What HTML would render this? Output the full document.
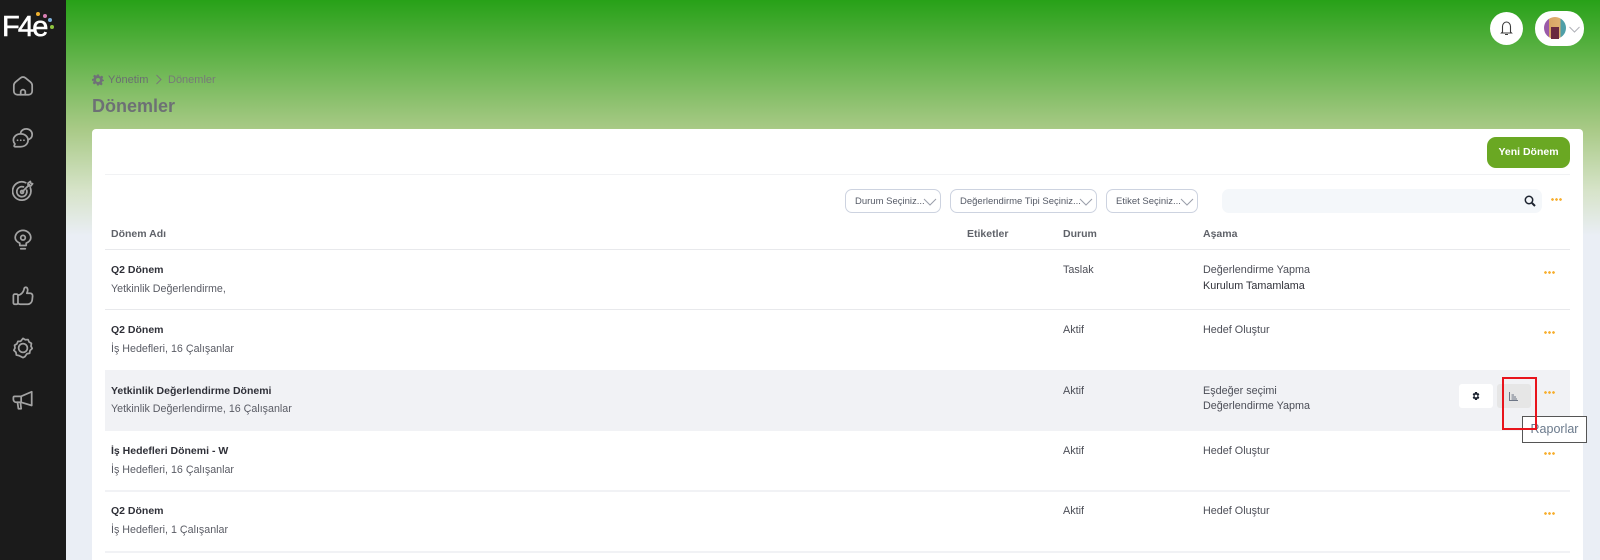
<!DOCTYPE html>
<html lang="tr"><head><meta charset="utf-8"><title>Dönemler</title>
<style>
*{box-sizing:border-box}
html,body{margin:0;padding:0;width:1600px;height:560px;overflow:hidden}
body{position:relative;font-family:"Liberation Sans",sans-serif;background:#eaeef5;color:#3f4254}
.a{position:absolute;white-space:nowrap}
#bg{left:0;top:0;width:1600px;height:240px;background:linear-gradient(#27a118 0,#a9ca87 130px,#d6e3c8 190px,#eaeef5 236px)}
#side{left:0;top:0;width:65.5px;height:560px;background:#1b1b1b}
#side svg{position:absolute;left:12px;width:22px;height:22px;fill:none;stroke:#a3a3a3;stroke-width:1.9;stroke-linecap:round;stroke-linejoin:round}
#card{left:92px;top:129px;width:1491px;height:431px;background:#fff;border-radius:4px 4px 0 0}
.flt{height:24px;top:189px;border:1px solid #cdd3e0;border-radius:7px;background:#fff;font-size:9.5px;line-height:23px;padding-left:9px;color:#555a66}
.flt svg{position:absolute;right:3px;top:7px}
.th{top:228px;font-size:10.5px;font-weight:bold;color:#5f6269}
.t1{font-size:10.5px;font-weight:bold;color:#2f3038}
.t2{font-size:10.7px;color:#5a5c65}
.t3{font-size:10.8px;color:#4c4e57}
.line{left:105px;width:1465px;height:1px;background:#e8e9ec}
.soft{background:#f1f2f5;height:2px}
.dots{font-size:0;width:11px;height:3px;background:radial-gradient(circle at 1.5px 1.5px,#f7ae2d 1.2px,transparent 1.5px) 0 0/4px 3px repeat-x}
</style></head><body>
<div id="bg" class="a"></div>
<div id="side" class="a">
<div class="a" style="left:2px;top:12px;font-size:29px;color:#fff;letter-spacing:-1.8px;line-height:30px;-webkit-text-stroke:.6px #fff">F4e</div>
<i class="a" style="left:36px;top:12px;width:4px;height:4px;border-radius:50%;background:#eeb02f"></i>
<i class="a" style="left:43px;top:14px;width:4px;height:4px;border-radius:50%;background:#d77fb4"></i>
<i class="a" style="left:48px;top:18px;width:4px;height:4px;border-radius:50%;background:#7fb1dc"></i>
<i class="a" style="left:50px;top:25px;width:4px;height:4px;border-radius:50%;background:#8fc43f"></i>
<svg style="top:75px" viewBox="0 0 24 24"><path d="M2 11.500c0-1.500.6-2.800 1.800-3.800l5.500-4.500c1.600-1.300 3.800-1.300 5.400 0l5.500 4.500c1.200 1 1.800 2.300 1.800 3.800v6c0 2.500-1.800 4-4 4H6c-2.200 0-4-1.500-4-4z"/><path d="M9.500 21.500v-3a2.500 2.500 0 0 1 5 0v3"/></svg>
<svg style="top:127px" viewBox="0 0 24 24"><path d="M9.500 7.500c4.500 0 8 3 8 7s-3.500 7-8 7H3.500c-1 0-1.500-.8-1-1.500l.7-1.500C2.200 17.300 1.500 16 1.500 14.500c0-4 3.500-7 8-7z"/><path d="M9.500 6c.7-2.300 3.200-4 6-4 3.800 0 6.500 2.700 6.500 6 0 2.500-1.300 4.500-3.500 5.500"/><path d="M6 14.500h.1M9.500 14.500h.1M13 14.500h.1"/></svg>
<svg style="top:180px" viewBox="0 0 24 24"><path d="M20 8.500A10 10 0 1 1 15 3"/><path d="M16 11a5.500 5.500 0 1 1-3.500-3.500"/><circle cx="11" cy="13" r="1.600"/><path d="M11.500 12.500 19 5M17.500 6.500V3.500L20 1.500l.5 2 2 .5-2 2.500z"/></svg>
<svg style="top:229px" viewBox="0 0 24 24"><path d="M8.500 18v-2.500C5.500 14 3.500 12 3.500 9.500a8.500 8 0 0 1 17 0c0 2.500-2 4.500-5 6V18z"/><circle cx="12" cy="9.500" r="2.500"/><path d="M9.500 21.500h5"/></svg>
<svg style="top:285px" viewBox="0 0 24 24"><rect x="1.500" y="10" width="5" height="11" rx="1.500"/><path d="M6.500 11c3 0 6-3 6.500-6 .2-1.500 1-2.500 2-2.500 1.500 0 2.500 2 2 4l-.8 2.500h3.500c1.800 0 3 1.500 2.800 3l-.5 4.500c-.3 2.500-2.500 4.500-5 4.500H9c-1 0-2-.5-2.500-1"/></svg>
<svg style="top:337px" viewBox="0 0 24 24"><path d="M12 1.500l2.500 1.500 3-.2 1.200 2.700 2.500 1.500-.5 3 1.300 2.500-2.300 2.200-.5 3-2.900.6L14 21.500l-2 1-2-1-2.300-1.200-2.900-.6-.5-3-2.300-2.200L3.300 12l-.5-3 2.500-1.500L6.500 4.800l3-.2z"/><circle cx="12" cy="12" r="4.800"/></svg>
<svg style="top:389px" viewBox="0 0 24 24"><path d="M1.500 9.500c0-1 .7-1.500 1.500-1.500h7l11.500-5V18l-11.500-3.500H4.500c-1.500 0-3-1.500-3-3z"/><path d="M10 8v6.500M6 14.500l1 7h3l-.8-7"/></svg>
</div>

<svg class="a" style="left:92px;top:74px" width="12" height="12" viewBox="0 0 24 24"><path fill="#6f7177" fill-rule="evenodd" d="M10 1h4l.7 3.200 2.200.9 2.800-1.800 2.800 2.800-1.800 2.800.9 2.200L24 12l-.4 2-3.200.9-.9 2.200 1.800 2.800-2.800 2.800-2.800-1.800-2.200.9L14 23h-4l-.7-3.200-2.200-.9-2.800 1.800-2.800-2.800 1.800-2.800-.9-2.200L0 14v-4l3.200-.7.9-2.200L2.300 4.300l2.800-2.800 2.800 1.800 2.200-.9zM12 8a4 4 0 1 0 0 8 4 4 0 0 0 0-8z"/></svg>
<div class="a" style="left:108px;top:74px;font-size:11px;line-height:13px;color:#6b6e72">Yönetim</div>
<svg class="a" style="left:155px;top:74px" width="8" height="11" viewBox="0 0 8 11"><path d="M1.500 1l4.500 4.500-4.500 4.500" fill="none" stroke="#777" stroke-width="1"/></svg>
<div class="a" style="left:168px;top:74px;font-size:11px;line-height:13px;color:#777a78">Dönemler</div>
<div class="a" style="left:92px;top:95px;font-size:18px;line-height:22px;font-weight:bold;color:#6d7075">Dönemler</div>

<div class="a" style="left:1490px;top:12px;width:33px;height:33px;border-radius:50%;background:#fff"></div>
<svg class="a" style="left:1500px;top:20px" width="13" height="16" viewBox="0 0 13 16"><path d="M2.500 12V6.500a4 4.500 0 0 1 8 0V12l1 1H1.500zM5 14.500h3" fill="none" stroke="#3b3b3b" stroke-width="1.100"/></svg>
<div class="a" style="left:1535px;top:11px;width:49px;height:35px;border-radius:17px;background:#fff"></div>
<div class="a" style="left:1544px;top:17px;width:22px;height:22px;border-radius:50%;background:linear-gradient(90deg,#9a5aa8 0,#9a5aa8 22%,#d8a565 22%,#e0b070 75%,#4f9fa8 75%)"></div>
<div class="a" style="left:1551px;top:27px;width:8px;height:12px;background:#6a2940"></div>
<svg class="a" style="left:1569px;top:26px" width="11" height="7" viewBox="0 0 11 7"><path d="M.5 1l5 5 5-5" fill="none" stroke="#b0b2b8" stroke-width="1"/></svg>

<div id="card" class="a"></div>
<div class="a" style="left:1487px;top:137px;width:83px;height:31px;border-radius:9px;background:#6aa823;color:#fff;font-size:10.5px;font-weight:bold;text-align:center;line-height:31px">Yeni Dönem</div>
<div class="a line" style="top:174px;background:#f1f2f4"></div>

<div class="a flt" style="left:845px;width:96px">Durum Seçiniz...<svg width="14" height="10" viewBox="0 0 14 10"><path d="M1 2l6 6 6-6" fill="none" stroke="#9a9eaa"/></svg></div>
<div class="a flt" style="left:950px;width:147px">Değerlendirme Tipi Seçiniz...<svg width="14" height="10" viewBox="0 0 14 10"><path d="M1 2l6 6 6-6" fill="none" stroke="#9a9eaa"/></svg></div>
<div class="a flt" style="left:1106px;width:92px">Etiket Seçiniz...<svg width="14" height="10" viewBox="0 0 14 10"><path d="M1 2l6 6 6-6" fill="none" stroke="#9a9eaa"/></svg></div>
<div class="a" style="left:1222px;top:189px;width:320px;height:24px;border-radius:7px;background:#f4f7fa"></div>
<svg class="a" style="left:1524px;top:195px" width="12" height="12" viewBox="0 0 12 12"><circle cx="5" cy="5" r="3.700" fill="none" stroke="#1d2430" stroke-width="1.500"/><path d="M8 8l3 3" stroke="#1d2430" stroke-width="2"/></svg>
<div class="a dots" style="left:1551px;top:198px"></div>

<div class="a th" style="left:111px">Dönem Adı</div>
<div class="a th" style="left:967px">Etiketler</div>
<div class="a th" style="left:1063px">Durum</div>
<div class="a th" style="left:1203px">Aşama</div>
<div class="a line" style="top:249px"></div>

<div class="a t1" style="left:111px;top:264px">Q2 Dönem</div>
<div class="a t2" style="left:111px;top:283px">Yetkinlik Değerlendirme,</div>
<div class="a t3" style="left:1063px;top:264px">Taslak</div>
<div class="a t3" style="left:1203px;top:264px">Değerlendirme Yapma</div>
<div class="a t3" style="left:1203px;top:280px;color:#2f3038">Kurulum Tamamlama</div>
<div class="a dots" style="left:1544px;top:271px"></div>
<div class="a line" style="top:309px"></div>

<div class="a t1" style="left:111px;top:324px">Q2 Dönem</div>
<div class="a t2" style="left:111px;top:343px">İş Hedefleri, 16 Çalışanlar</div>
<div class="a t3" style="left:1063px;top:324px">Aktif</div>
<div class="a t3" style="left:1203px;top:324px">Hedef Oluştur</div>
<div class="a dots" style="left:1544px;top:331px"></div>

<div class="a" style="left:105px;top:370px;width:1465px;height:61px;background:#f1f2f5"></div>
<div class="a t1" style="left:111px;top:385px">Yetkinlik Değerlendirme Dönemi</div>
<div class="a t2" style="left:111px;top:403px">Yetkinlik Değerlendirme, 16 Çalışanlar</div>
<div class="a t3" style="left:1063px;top:385px">Aktif</div>
<div class="a t3" style="left:1203px;top:385px">Eşdeğer seçimi</div>
<div class="a t3" style="left:1203px;top:400px">Değerlendirme Yapma</div>
<div class="a" style="left:1459px;top:384px;width:34px;height:24px;border-radius:3px;background:#fff"></div>
<svg class="a" style="left:1472px;top:392px" width="8" height="8" viewBox="0 0 24 24"><path fill="#1c2330" fill-rule="evenodd" d="M9 0h6l1 4 3-1 3 5-3 3 0 2 3 3-3 5-3-1-1 4H9l-1-4-3 1-3-5 3-3 0-2-3-3 3-5 3 1zM12 8a4 4 0 1 0 0 8 4 4 0 0 0 0-8z"/></svg>
<div class="a" style="left:1497px;top:384px;width:34px;height:24px;border-radius:3px;background:#e6e6e6"></div>
<svg class="a" style="left:1509px;top:392px" width="9" height="9" viewBox="0 0 9 9"><path d="M.5 0v8.500H9M2.500 3H5M2.500 5H7M2.500 7H8" fill="none" stroke="#6d7686" stroke-width="1"/></svg>
<div class="a dots" style="left:1544px;top:391px"></div>

<div class="a t1" style="left:111px;top:445px">İş Hedefleri Dönemi - W</div>
<div class="a t2" style="left:111px;top:464px">İş Hedefleri, 16 Çalışanlar</div>
<div class="a t3" style="left:1063px;top:445px">Aktif</div>
<div class="a t3" style="left:1203px;top:445px">Hedef Oluştur</div>
<div class="a dots" style="left:1544px;top:452px"></div>
<div class="a line soft" style="top:490px"></div>

<div class="a t1" style="left:111px;top:505px">Q2 Dönem</div>
<div class="a t2" style="left:111px;top:524px">İş Hedefleri, 1 Çalışanlar</div>
<div class="a t3" style="left:1063px;top:505px">Aktif</div>
<div class="a t3" style="left:1203px;top:505px">Hedef Oluştur</div>
<div class="a dots" style="left:1544px;top:512px"></div>
<div class="a line soft" style="top:551px"></div>

<div class="a" style="left:1522px;top:416px;width:65px;height:27px;background:#fff;border:1px solid #555;color:#6b7a8c;font-size:12.5px;line-height:25px;text-align:center">Raporlar</div>
<div class="a" style="left:1502px;top:377px;width:35px;height:53px;border:2px solid #e8141c"></div>
</body></html>
